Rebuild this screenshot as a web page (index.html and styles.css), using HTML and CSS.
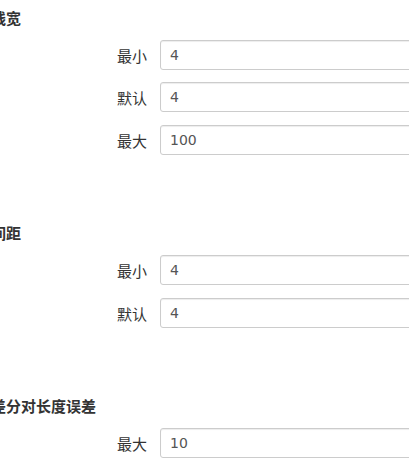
FILE: index.html
```html
<!DOCTYPE html>
<html lang="zh">
<head>
<meta charset="utf-8">
<link rel="stylesheet" href="styles.css">
</head>
<body>
<div class="panel">
  <section class="section">
    <div class="heading">线宽</div>
    <div class="row"><label class="label">最小</label><input class="field" type="text" value="4"></div>
    <div class="row"><label class="label">默认</label><input class="field" type="text" value="4"></div>
    <div class="row"><label class="label">最大</label><input class="field" type="text" value="100"></div>
  </section>
  <section class="section">
    <div class="heading">间距</div>
    <div class="row"><label class="label">最小</label><input class="field" type="text" value="4"></div>
    <div class="row"><label class="label">默认</label><input class="field" type="text" value="4"></div>
  </section>
  <section class="section">
    <div class="heading">差分对长度误差</div>
    <div class="row"><label class="label">最大</label><input class="field" type="text" value="10"></div>
  </section>
</div>
</body>
</html>
```

FILE: styles.css
```css
html, body {
  margin: 0;
  padding: 0;
  background: #fff;
  overflow: hidden;
}

body {
  font-family: "DejaVu Sans", "Noto Sans CJK SC", sans-serif;
  color: #333;
}

.panel {
  margin-left: -9px;
  padding-top: 7.5px;
  width: 440px;
}

.section {
  margin-bottom: 68.5px;
}

.heading {
  font-family: "Noto Sans CJK SC", sans-serif;
  font-size: 15px;
  font-weight: bold;
  line-height: 20px;
  height: 20px;
  margin-bottom: 12px;
}

.row {
  display: grid;
  grid-template-columns: 156px 1fr;
  column-gap: 13px;
  align-items: center;
  margin-bottom: 12.5px;
}

.label {
  font-family: "Noto Sans CJK SC", sans-serif;
  text-align: right;
  font-size: 15px;
  line-height: 20px;
  padding-top: 2px;
}

.field {
  box-sizing: border-box;
  height: 30px;
  padding: 4px 9px;
  border: 1px solid #ccc;
  border-radius: 3px;
  font-family: "DejaVu Sans", "Noto Sans CJK SC", sans-serif;
  font-size: 14px;
  color: #555;
  background: #fff;
  box-shadow: inset 0 1px 1px rgba(0, 0, 0, 0.075);
  width: 100%;
  margin: 0;
}
```
